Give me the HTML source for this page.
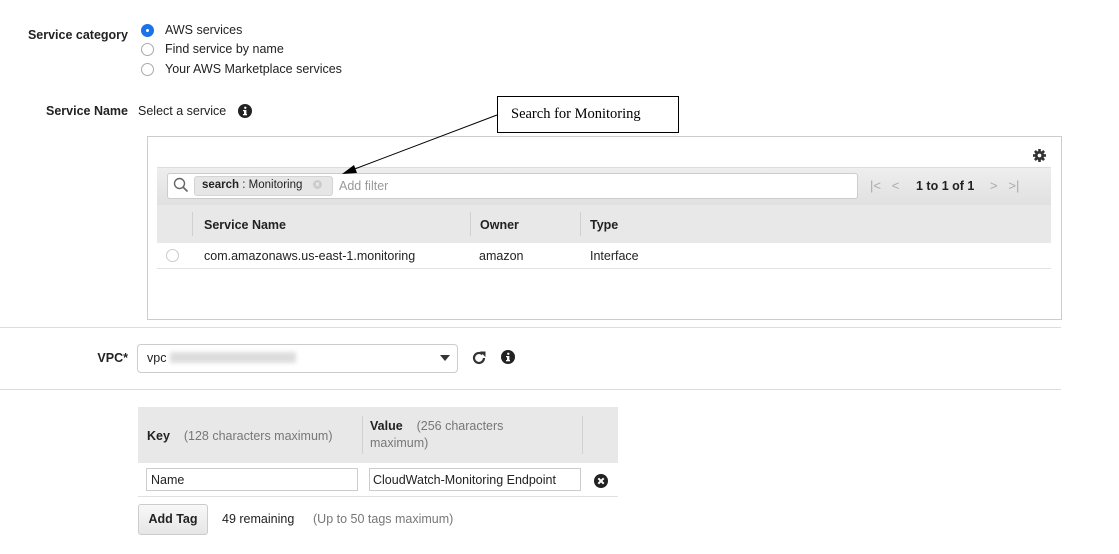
<!DOCTYPE html>
<html><head><meta charset="utf-8"><style>
body{margin:0;width:1119px;height:554px;background:#fff;font-family:"Liberation Sans",Arial,sans-serif;font-size:12.5px;color:#222;position:relative;overflow:hidden}
.a{position:absolute;white-space:nowrap}
.b{font-weight:bold}
.r{position:absolute;width:11px;height:11px;border:1px solid #aaa;border-radius:50%;background:#fff}
.g{color:#777}
</style></head><body>
<div class="a b" style="right:991px;top:28px">Service category</div>
<div class="r" style="left:141px;top:24px;background:#1a73e8;border-color:#1a73e8"><div style="position:absolute;left:4px;top:4px;width:3px;height:3px;background:#fff;border-radius:50%"></div></div>
<div class="a" style="left:165px;top:23px">AWS services</div>
<div class="r" style="left:141px;top:43px"></div>
<div class="a" style="left:165px;top:42px">Find service by name</div>
<div class="r" style="left:141px;top:63px"></div>
<div class="a" style="left:165px;top:62px">Your AWS Marketplace services</div>

<div class="a b" style="right:991px;top:104px">Service Name</div>
<div class="a" style="left:138px;top:104px">Select a service</div>
<svg class="a" style="left:238px;top:104px" width="14" height="14" viewBox="0 0 14 14"><circle cx="7" cy="7" r="7" fill="#222"/><rect x="6" y="6" width="2.4" height="5" fill="#fff"/><rect x="5" y="10" width="4" height="1.3" fill="#fff"/><rect x="5" y="6" width="2" height="1.2" fill="#fff"/><circle cx="7.3" cy="3.8" r="1.2" fill="#fff"/></svg>

<div class="a" style="left:147px;top:136px;width:913px;height:182px;border:1px solid #ccc"></div>
<svg class="a" style="left:1033px;top:149px" width="13" height="13" viewBox="0 0 14 14"><g fill="#333"><circle cx="7" cy="7" r="5"/><rect x="5.6" y="0" width="2.8" height="14"/><rect x="0" y="5.6" width="14" height="2.8"/><rect x="5.6" y="0" width="2.8" height="14" transform="rotate(45 7 7)"/><rect x="5.6" y="0" width="2.8" height="14" transform="rotate(-45 7 7)"/></g><circle cx="7" cy="7" r="2" fill="#fff"/></svg>

<div class="a" style="left:157px;top:167px;width:894px;height:38px;background:linear-gradient(#eee,#e0e0e0);border-top:1px solid #ddd"></div>
<div class="a" style="left:167px;top:173px;width:689px;height:24px;background:#fff;border:1px solid #ccc;border-radius:3px"></div>
<svg class="a" style="left:173px;top:177px" width="16" height="16" viewBox="0 0 16 16"><circle cx="6.5" cy="6.5" r="5" fill="none" stroke="#666" stroke-width="1.4"/><path d="M10 10l4.5 4.5" stroke="#666" stroke-width="1.6"/></svg>
<div class="a" style="left:194px;top:176px;width:139px;height:20px;background:#e6e6e6;border:1px solid #d4d4d4;border-radius:3px;box-sizing:border-box"></div>
<div class="a" style="left:202px;top:179px;font-size:11.5px"><b>search</b> : Monitoring</div>
<div class="a" style="left:313px;top:180px;width:9px;height:9px;border-radius:50%;background:#ccc;color:#fff;font-size:8px;line-height:9px;text-align:center">×</div>
<div class="a g" style="left:339px;top:179px;color:#999">Add filter</div>
<div class="a" style="left:870px;top:178px;color:#aaa;font-size:13px">|&lt;&nbsp;&nbsp;&nbsp;&lt;</div>
<div class="a b" style="left:916px;top:179px">1 to 1 of 1</div>
<div class="a" style="left:990px;top:178px;color:#aaa;font-size:13px">&gt;&nbsp;&nbsp;&nbsp;&gt;|</div>

<div class="a" style="left:157px;top:205px;width:894px;height:38px;background:#e8e8e8"></div>
<div class="a" style="left:192px;top:212px;width:1px;height:24px;background:#d0d0d0"></div>
<div class="a" style="left:470px;top:212px;width:1px;height:24px;background:#d0d0d0"></div>
<div class="a" style="left:580px;top:212px;width:1px;height:24px;background:#d0d0d0"></div>
<div class="a b" style="left:204px;top:218px">Service Name</div>
<div class="a b" style="left:480px;top:218px">Owner</div>
<div class="a b" style="left:590px;top:218px">Type</div>
<div class="r" style="left:166px;top:249px;border-color:#ccc"></div>
<div class="a" style="left:204px;top:249px">com.amazonaws.us-east-1.monitoring</div>
<div class="a" style="left:479px;top:249px">amazon</div>
<div class="a" style="left:590px;top:249px">Interface</div>
<div class="a" style="left:157px;top:268px;width:894px;height:1px;background:#e3e3e3"></div>

<div class="a" style="left:497px;top:96px;width:180px;height:35px;border:1px solid #000;background:#fff"></div>
<div class="a" style="left:511px;top:106px;font-family:'Liberation Serif',serif;font-size:14.5px;color:#000">Search for Monitoring</div>
<svg class="a" style="left:330px;top:110px" width="170" height="70"><line x1="167" y1="5" x2="22" y2="60" stroke="#000" stroke-width="1"/><polygon points="12,64 24,55 27,63" fill="#000"/></svg>

<div class="a" style="left:0;top:327px;width:1061px;height:1px;background:#ddd"></div>
<div class="a b" style="right:991px;top:351px">VPC*</div>
<div class="a" style="left:137px;top:344px;width:321px;height:29px;border:1px solid #ccc;border-radius:4px;box-sizing:border-box"></div>
<div class="a" style="left:147px;top:351px">vpc</div>
<div class="a" style="left:170px;top:352px;width:126px;height:11px;background:#ddd;filter:blur(2px)"></div>
<div class="a" style="left:440px;top:355px;border-left:5px solid transparent;border-right:5px solid transparent;border-top:6px solid #333"></div>
<svg class="a" style="left:471px;top:350px" width="16" height="16" viewBox="0 0 16 16"><path d="M13 8a5 5 0 1 1-1.6-3.7" fill="none" stroke="#333" stroke-width="2.2"/><polygon points="9,1.5 14.5,1.5 14.5,7" fill="#333"/></svg>
<svg class="a" style="left:501px;top:350px" width="14" height="14" viewBox="0 0 14 14"><circle cx="7" cy="7" r="7" fill="#222"/><rect x="6" y="6" width="2.4" height="5" fill="#fff"/><rect x="5" y="10" width="4" height="1.3" fill="#fff"/><rect x="5" y="6" width="2" height="1.2" fill="#fff"/><circle cx="7.3" cy="3.8" r="1.2" fill="#fff"/></svg>
<div class="a" style="left:0;top:389px;width:1061px;height:1px;background:#ddd"></div>

<div class="a" style="left:138px;top:407px;width:480px;height:56px;background:#e8e8e8"></div>
<div class="a" style="left:362px;top:416px;width:1px;height:38px;background:#d0d0d0"></div>
<div class="a" style="left:582px;top:416px;width:1px;height:38px;background:#d0d0d0"></div>
<div class="a" style="left:147px;top:429px"><b>Key</b>&nbsp;&nbsp;&nbsp;&nbsp;<span class="g">(128 characters maximum)</span></div>
<div class="a" style="left:370px;top:419px"><b>Value</b>&nbsp;&nbsp;&nbsp;&nbsp;<span class="g">(256 characters</span></div>
<div class="a g" style="left:370px;top:436px">maximum)</div>
<div class="a" style="left:146px;top:468px;width:212px;height:23px;border:1px solid #ccc;box-sizing:border-box"></div>
<div class="a" style="left:151px;top:473px">Name</div>
<div class="a" style="left:369px;top:468px;width:212px;height:23px;border:1px solid #ccc;box-sizing:border-box"></div>
<div class="a" style="left:373px;top:473px">CloudWatch-Monitoring Endpoint</div>
<svg class="a" style="left:594px;top:474px" width="14" height="14" viewBox="0 0 14 14"><circle cx="7" cy="7" r="7" fill="#222"/><path d="M4.3 4.3l5.4 5.4M9.7 4.3l-5.4 5.4" stroke="#fff" stroke-width="2"/></svg>
<div class="a" style="left:138px;top:496px;width:480px;height:1px;background:#e0e0e0"></div>
<div class="a b" style="left:138px;top:504px;width:70px;height:31px;border:1px solid #ccc;border-radius:3px;background:linear-gradient(#f8f8f8,#e6e6e6);box-sizing:border-box;text-align:center;line-height:29px">Add Tag</div>
<div class="a" style="left:222px;top:512px">49 remaining</div>
<div class="a g" style="left:313px;top:512px">(Up to 50 tags maximum)</div>
</body></html>
